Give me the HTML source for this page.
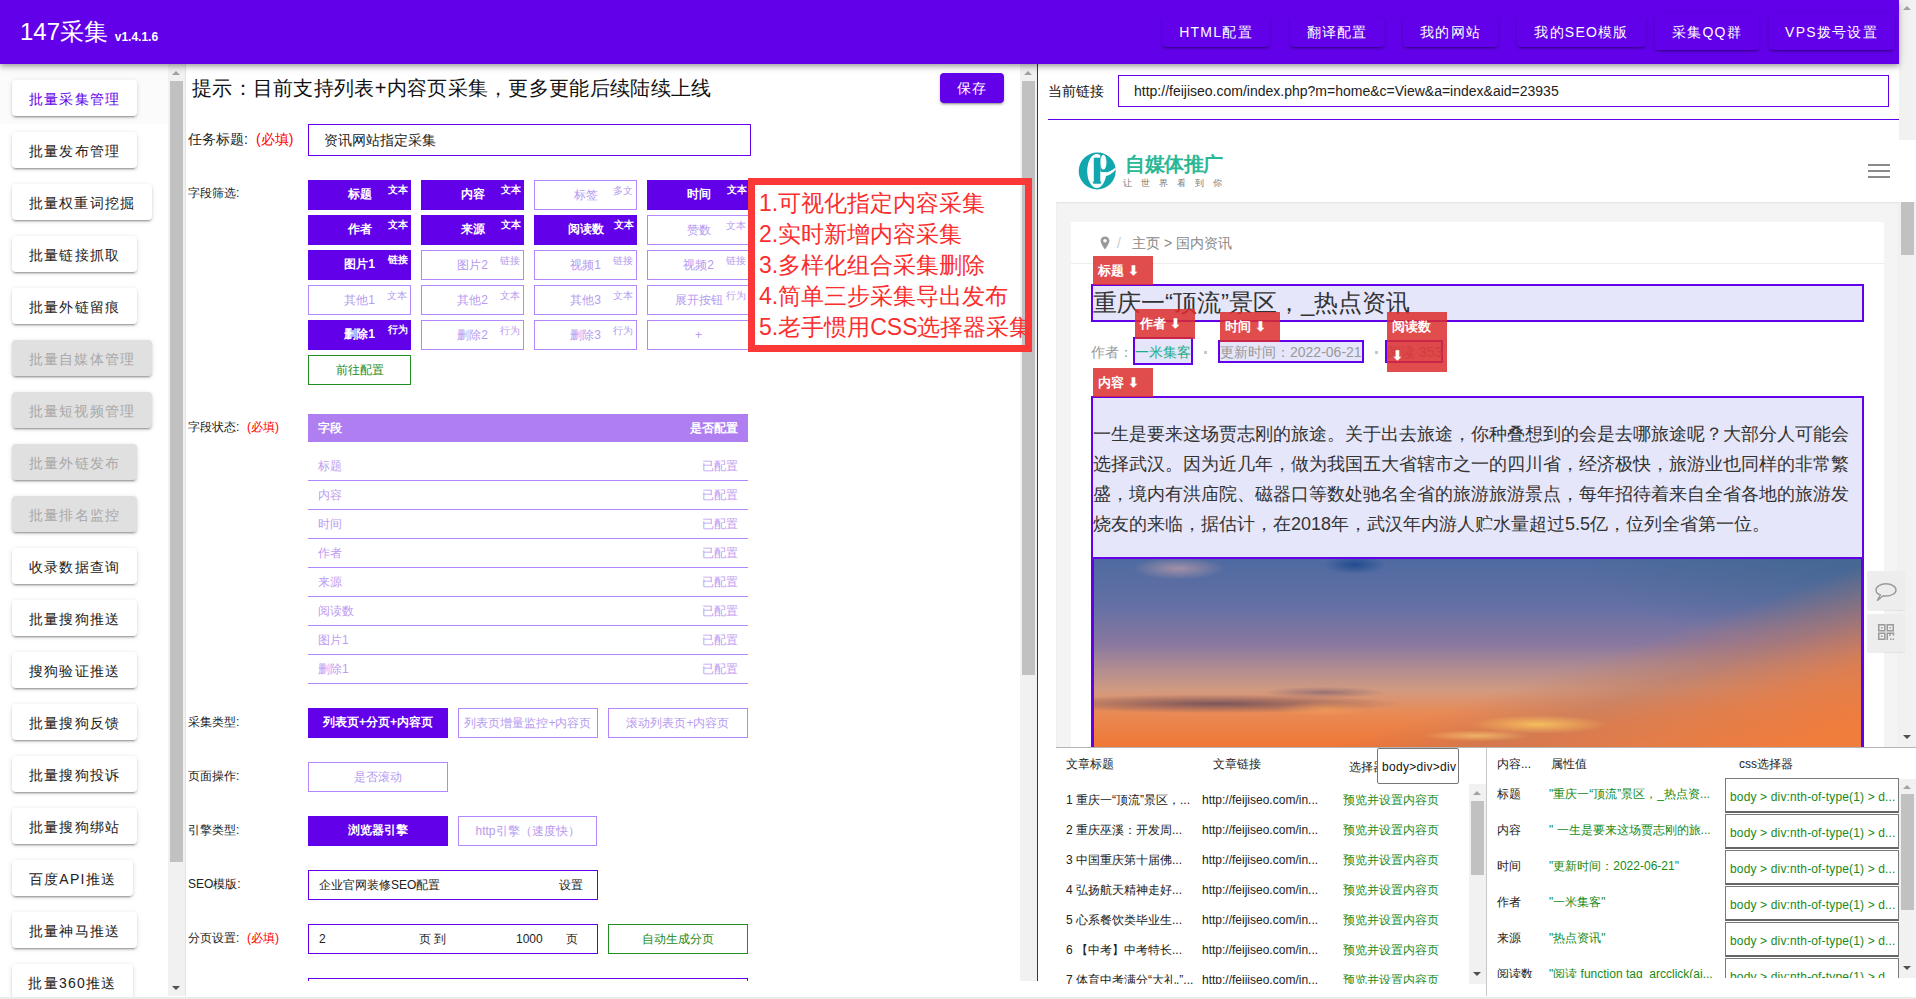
<!DOCTYPE html>
<html><head><meta charset="utf-8">
<style>
*{box-sizing:border-box;margin:0;padding:0}
html,body{width:1916px;height:999px;overflow:hidden}
body{position:relative;background:#fff;font-family:"Liberation Sans",sans-serif;color:#000}
.a{position:absolute}
.hdr{left:0;top:0;width:1899px;height:64px;background:#6200ea;z-index:10;box-shadow:0 2px 4px -1px rgba(0,0,0,.2),0 4px 5px 0 rgba(0,0,0,.14),0 1px 10px 0 rgba(0,0,0,.12)}
.nb{top:17px;height:30px;background:#6200ea;border-radius:4px;color:#fff;font-size:14px;letter-spacing:1.25px;text-align:center;line-height:30px;box-shadow:0 3px 1px -2px rgba(0,0,0,.2),0 2px 2px 0 rgba(0,0,0,.14),0 1px 5px 0 rgba(0,0,0,.12);white-space:nowrap}
.sb{left:12px;height:36px;width:125px;background:#fff;border-radius:4px;color:#222;font-size:14px;letter-spacing:1.25px;text-align:center;line-height:36px;padding-top:1px;box-shadow:0 3px 1px -2px rgba(0,0,0,.2),0 2px 2px 0 rgba(0,0,0,.14),0 1px 5px 0 rgba(0,0,0,.12);white-space:nowrap}
.sb.w{width:140px}.sb.n{width:121px}
.sb.d{background:#e0e0e0;color:#a8a8a8}
.sb.act{color:#6200ea}
.trk{background:#f1f1f1}
.thm{background:#c1c1c1}
.up{width:0;height:0;border-left:4px solid transparent;border-right:4px solid transparent;border-bottom:4px solid #a3a3a3}
.dn{width:0;height:0;border-left:4px solid transparent;border-right:4px solid transparent;border-top:4px solid #505050}
.lbl{font-size:12px;color:#222;white-space:nowrap}
.req{color:#f00}
.fb{width:103px;height:30px;font-size:12px;text-align:center;line-height:28px;white-space:nowrap}
.fb.on{background:#6200ea;color:#fff;font-weight:bold}
.fb.off{border:1px solid #b388ff;color:#b69af0;background:#fff}
.fb sup{position:absolute;right:3px;top:5px;font-size:10px;line-height:10px}
.tr{left:308px;width:440px;height:29px;border-bottom:1px solid #b388ff;color:#c09cf2;font-size:12px;line-height:28px}
.inp{height:30px;border:1px solid #6200ea;font-size:12px;line-height:28px;color:#222}
.tag{background:rgba(220,45,45,.85);color:#fff;font-weight:bold;font-size:13px;line-height:29px;padding-left:5px;white-space:nowrap}
.sunset{background:
radial-gradient(ellipse 4% 5% at 34% 3%,rgba(25,70,140,.85),rgba(25,70,140,0)),
radial-gradient(ellipse 6% 6% at 11% 5%,rgba(230,175,170,.55),rgba(230,175,170,0)),
radial-gradient(ellipse 9% 5% at 58% 88%,rgba(255,205,95,.8),rgba(255,205,95,0)),
radial-gradient(ellipse 7% 3% at 50% 94%,rgba(255,215,120,.6),rgba(255,215,120,0)),
radial-gradient(ellipse 6% 4% at 30% 80%,rgba(245,160,90,.6),rgba(245,160,90,0)),
radial-gradient(ellipse 24% 5% at 16% 77%,rgba(90,65,85,.75),rgba(90,65,85,0)),
radial-gradient(ellipse 8% 3% at 30% 71%,rgba(95,75,105,.5),rgba(95,75,105,0)),
linear-gradient(161deg,rgba(200,120,90,0) 60%,rgba(190,120,95,.55) 71%,rgba(225,125,75,.9) 82%,rgba(240,125,60,1) 95%),
radial-gradient(ellipse 35% 45% at 98% 0%,rgba(60,100,135,.55),rgba(60,100,135,0)),
linear-gradient(180deg,#4e6aa0 0%,#6470a5 25%,#8878a0 45%,#b08c92 58%,#d29a80 70%,#e98a55 82%,#ef7636 100%)}
.bt{font-size:12px;line-height:16px;color:#222;white-space:nowrap}
.sel{width:174px;height:35px;border:1px solid #7a7a7a;border-bottom:2px solid #666;font-size:12px;line-height:37px;padding-left:4px;letter-spacing:0.15px;overflow:hidden;color:#178a17;white-space:nowrap;background:#fff}
</style></head><body>

<!-- HEADER -->
<div class="a hdr">
  <div class="a" style="left:20px;top:16px;color:#fff;font-size:24px;line-height:32px;white-space:nowrap">147采集 <span style="font-size:12px;font-weight:bold;position:relative;top:1px">v1.4.1.6</span></div>
  <div class="a nb" style="left:1162px;width:108px">HTML配置</div>
  <div class="a nb" style="left:1290px;width:94px">翻译配置</div>
  <div class="a nb" style="left:1403px;width:95px">我的网站</div>
  <div class="a nb" style="left:1517px;width:129px">我的SEO模版</div>
  <div class="a nb" style="left:1655px;width:104px;top:14px;height:36px;line-height:36px">采集QQ群</div>
  <div class="a nb" style="left:1769px;width:125px;top:14px;height:36px;line-height:36px">VPS拨号设置</div>
</div>
<!-- page scrollbar top -->
<div class="a trk" style="left:1899px;top:0;width:17px;height:140px"></div>
<div class="a up" style="left:1903px;top:6px"></div>

<!-- SIDEBAR -->
<div id="sbtint" class="a" style="left:0;top:64px;width:168px;height:60px;background:#fbfbfc"></div>
<div class="a sb act" style="top:80px">批量采集管理</div>
<div class="a sb" style="top:132px">批量发布管理</div>
<div class="a sb w" style="top:184px">批量权重词挖掘</div>
<div class="a sb" style="top:236px">批量链接抓取</div>
<div class="a sb" style="top:288px">批量外链留痕</div>
<div class="a sb w d" style="top:340px">批量自媒体管理</div>
<div class="a sb w d" style="top:392px">批量短视频管理</div>
<div class="a sb d" style="top:444px">批量外链发布</div>
<div class="a sb d" style="top:496px">批量排名监控</div>
<div class="a sb" style="top:548px">收录数据查询</div>
<div class="a sb" style="top:600px">批量搜狗推送</div>
<div class="a sb" style="top:652px">搜狗验证推送</div>
<div class="a sb" style="top:704px">批量搜狗反馈</div>
<div class="a sb" style="top:756px">批量搜狗投诉</div>
<div class="a sb" style="top:808px">批量搜狗绑站</div>
<div class="a sb n" style="top:860px">百度API推送</div>
<div class="a sb" style="top:912px">批量神马推送</div>
<div class="a sb n" style="top:964px">批量360推送</div>

<!-- sidebar scrollbar -->
<div class="a trk" style="left:168px;top:64px;width:17px;height:932px"></div>
<div class="a thm" style="left:170px;top:81px;width:13px;height:781px"></div>
<div class="a up" style="left:172px;top:71px"></div>
<div class="a dn" style="left:172px;top:986px"></div>
<div class="a" style="left:185px;top:64px;width:1px;height:932px;background:#e4e4e4"></div>

<!-- MAIN -->
<div id="main">
<div class="a" style="left:192px;top:74px;font-size:20px;line-height:28px;color:#111;white-space:nowrap;letter-spacing:0.3px">提示：目前支持列表+内容页采集，更多更能后续陆续上线</div>
<div class="a" style="left:940px;top:73px;width:64px;height:30px;border-radius:4px;background:#6200ea;color:#fff;font-size:14px;letter-spacing:1.25px;text-align:center;line-height:30px;box-shadow:0 3px 1px -2px rgba(0,0,0,.2),0 2px 2px 0 rgba(0,0,0,.14),0 1px 5px 0 rgba(0,0,0,.12)">保存</div>
<div class="a lbl" style="left:188px;top:131px;font-size:14px">任务标题<span style="display:inline-block;width:12px">:</span><span class="req">(必填)</span></div>
<div class="a" style="left:308px;top:124px;width:443px;height:32px;border:1px solid #6200ea;font-size:14px;line-height:30px;padding-left:15px;color:#222">资讯网站指定采集</div>
<div class="a lbl" style="left:188px;top:185px">字段筛选:</div>
<div class="a fb on" style="left:308px;top:180px">标题<sup>文本</sup></div>
<div class="a fb on" style="left:421px;top:180px">内容<sup>文本</sup></div>
<div class="a fb off" style="left:534px;top:180px">标签<sup>多文</sup></div>
<div class="a fb on" style="left:647px;top:180px">时间<sup>文本</sup></div>
<div class="a fb on" style="left:308px;top:215px">作者<sup>文本</sup></div>
<div class="a fb on" style="left:421px;top:215px">来源<sup>文本</sup></div>
<div class="a fb on" style="left:534px;top:215px">阅读数<sup>文本</sup></div>
<div class="a fb off" style="left:647px;top:215px">赞数<sup>文本</sup></div>
<div class="a fb on" style="left:308px;top:250px">图片1<sup>链接</sup></div>
<div class="a fb off" style="left:421px;top:250px">图片2<sup>链接</sup></div>
<div class="a fb off" style="left:534px;top:250px">视频1<sup>链接</sup></div>
<div class="a fb off" style="left:647px;top:250px">视频2<sup>链接</sup></div>
<div class="a fb off" style="left:308px;top:285px">其他1<sup>文本</sup></div>
<div class="a fb off" style="left:421px;top:285px">其他2<sup>文本</sup></div>
<div class="a fb off" style="left:534px;top:285px">其他3<sup>文本</sup></div>
<div class="a fb off" style="left:647px;top:285px">展开按钮<sup>行为</sup></div>
<div class="a fb on" style="left:308px;top:320px">删除1<sup>行为</sup></div>
<div class="a fb off" style="left:421px;top:320px">删除2<sup>行为</sup></div>
<div class="a fb off" style="left:534px;top:320px">删除3<sup>行为</sup></div>
<div class="a fb off" style="left:647px;top:320px">+</div>
<div class="a fb" style="left:308px;top:355px;border:1px solid #228b22;color:#228b22">前往配置</div>
<div class="a lbl" style="left:188px;top:419px">字段状态<span style="display:inline-block;width:11px">:</span><span class="req">(必填)</span></div>
<div class="a" style="left:308px;top:414px;width:440px;height:28px;background:#af7ff2;color:#fff;font-size:12px;line-height:28px;font-weight:bold"><span class="a" style="left:10px">字段</span><span class="a" style="right:10px">是否配置</span></div>
<div class="a tr" style="top:452px"><span class="a" style="left:10px">标题</span><span class="a" style="right:10px">已配置</span></div>
<div class="a tr" style="top:481px"><span class="a" style="left:10px">内容</span><span class="a" style="right:10px">已配置</span></div>
<div class="a tr" style="top:510px"><span class="a" style="left:10px">时间</span><span class="a" style="right:10px">已配置</span></div>
<div class="a tr" style="top:539px"><span class="a" style="left:10px">作者</span><span class="a" style="right:10px">已配置</span></div>
<div class="a tr" style="top:568px"><span class="a" style="left:10px">来源</span><span class="a" style="right:10px">已配置</span></div>
<div class="a tr" style="top:597px"><span class="a" style="left:10px">阅读数</span><span class="a" style="right:10px">已配置</span></div>
<div class="a tr" style="top:626px"><span class="a" style="left:10px">图片1</span><span class="a" style="right:10px">已配置</span></div>
<div class="a tr" style="top:655px"><span class="a" style="left:10px">删除1</span><span class="a" style="right:10px">已配置</span></div>
<div class="a lbl" style="left:188px;top:714px">采集类型:</div>
<div class="a fb on" style="left:308px;top:708px;width:140px;">列表页+分页+内容页</div>
<div class="a fb off" style="left:458px;top:708px;width:140px;">列表页增量监控+内容页</div>
<div class="a fb off" style="left:608px;top:708px;width:140px;">滚动列表页+内容页</div>
<div class="a lbl" style="left:188px;top:768px">页面操作:</div>
<div class="a fb off" style="left:308px;top:762px;width:140px;">是否滚动</div>
<div class="a lbl" style="left:188px;top:822px">引擎类型:</div>
<div class="a fb on" style="left:308px;top:816px;width:140px;">浏览器引擎</div>
<div class="a fb off" style="left:458px;top:816px;width:139px;">http引擎（速度快）</div>
<div class="a lbl" style="left:188px;top:876px">SEO模版:</div>
<div class="a inp" style="left:308px;top:870px;width:290px"><span class="a" style="left:10px">企业官网装修SEO配置</span><span class="a" style="left:250px">设置</span></div>
<div class="a lbl" style="left:188px;top:930px">分页设置<span style="display:inline-block;width:11px">:</span><span class="req">(必填)</span></div>
<div class="a inp" style="left:308px;top:924px;width:290px"><span class="a" style="left:10px">2</span><span class="a" style="left:110px">页 到</span><span class="a" style="left:207px">1000</span><span class="a" style="left:257px">页</span></div>
<div class="a fb" style="left:608px;top:924px;width:140px;border:1px solid #228b22;color:#228b22">自动生成分页</div>
<div class="a" style="left:308px;top:978px;width:440px;height:3px;border:1px solid #6200ea;border-bottom:0"></div>
<div class="a" style="left:748px;top:178px;width:284px;height:174px;border:7px solid #fb3838;background:#fff;z-index:4"></div>
<div class="a" style="left:759px;top:188px;font-size:23px;line-height:30px;color:#fb2e2e;white-space:nowrap;z-index:7">1.可视化指定内容采集</div>
<div class="a" style="left:759px;top:219px;font-size:23px;line-height:30px;color:#fb2e2e;white-space:nowrap;z-index:7">2.实时新增内容采集</div>
<div class="a" style="left:759px;top:250px;font-size:23px;line-height:30px;color:#fb2e2e;white-space:nowrap;z-index:7">3.多样化组合采集删除</div>
<div class="a" style="left:759px;top:281px;font-size:23px;line-height:30px;color:#fb2e2e;white-space:nowrap;z-index:7">4.简单三步采集导出发布</div>
<div class="a" style="left:759px;top:312px;font-size:23px;line-height:30px;color:#fb2e2e;white-space:nowrap;z-index:7">5.老手惯用CSS选择器采集</div>
<div class="a trk" style="left:1020px;top:64px;width:17px;height:917px;z-index:5"></div>
<div class="a thm" style="left:1022px;top:81px;width:13px;height:594px;z-index:5"></div>
<div class="a up" style="left:1024px;top:71px;z-index:5"></div>
<div class="a dn" style="left:1024px;top:970px"></div>
<div class="a" style="left:1037px;top:64px;width:1px;height:917px;background:#6200ea"></div>
<div class="a" style="left:1025px;top:178px;width:7px;height:174px;background:#fb3838;z-index:8"></div>
<div class="a" style="left:1020px;top:178px;width:12px;height:7px;background:#fb3838;z-index:8"></div>
<div class="a" style="left:1020px;top:345px;width:12px;height:7px;background:#fb3838;z-index:8"></div>
</div><!--/main-->

<!-- RIGHT -->
<div id="right">
<div class="a" style="left:1048px;top:83px;font-size:14px;line-height:16px;color:#111;white-space:nowrap">当前链接</div>
<div class="a" style="left:1118px;top:75px;width:771px;height:32px;border:1px solid #6200ea;font-size:14px;line-height:30px;padding-left:15px;color:#222;white-space:nowrap">http://feijiseo.com/index.php?m=home&amp;c=View&amp;a=index&amp;aid=23935</div>
<div class="a" style="left:1048px;top:119px;width:851px;height:1px;background:#6200ea"></div>
<div class="a" style="left:1056px;top:140px;width:860px;height:62px;background:#fff"></div>
<svg class="a" style="left:1074px;top:148px" width="48" height="46" viewBox="0 0 48 46">
<defs><clipPath id="lc"><circle cx="23.2" cy="23" r="18.5"/></clipPath></defs>
<g clip-path="url(#lc)">
<rect x="0" y="0" width="48" height="46" fill="#12a6ae"/>
<ellipse cx="22.8" cy="23" rx="9.6" ry="17" fill="#fff"/>
<path d="M26.3,4 L44,4 L44,18 C40,21.5 36,24.3 30.5,24.3 C28.5,24.3 27.3,23.8 26.3,23.2 Z" fill="#12a6ae"/>
<ellipse cx="29.4" cy="14.2" rx="3.1" ry="7.4" fill="#fff"/>
<path d="M27,24.2 C33,25.6 38,23 44,17.5 L44,19.5 C39,24.5 35,27.8 31.8,27.9 C30.3,27.9 28.5,26 27,24.2Z" fill="#fff"/>
<rect x="19.8" y="9.7" width="6.5" height="25.8" fill="#12a6ae"/>
<rect x="18.9" y="33.6" width="8.2" height="1.9" fill="#12a6ae"/>
</g></svg>
<div class="a" style="left:1125px;top:151px;font-family:'Liberation Serif',serif;font-weight:bold;font-size:20px;line-height:26px;color:#2ab795;white-space:nowrap;letter-spacing:-0.5px">自媒体推广</div>
<div class="a" style="left:1123px;top:178px;font-size:9px;line-height:11px;color:#777;white-space:nowrap;letter-spacing:9px">让世界看到你</div>
<div class="a" style="left:1868px;top:164px;width:22px;height:2px;background:#8a8a8a"></div>
<div class="a" style="left:1868px;top:170px;width:22px;height:2px;background:#8a8a8a"></div>
<div class="a" style="left:1868px;top:176px;width:22px;height:2px;background:#8a8a8a"></div>
<div class="a" style="left:1056px;top:202px;width:843px;height:545px;background:#f4f4f4;box-shadow:inset 0 1px 2px rgba(0,0,0,.08)"></div>
<div class="a trk" style="left:1899px;top:202px;width:17px;height:545px"></div>
<div class="a thm" style="left:1901px;top:202px;width:13px;height:53px"></div>
<div class="a dn" style="left:1903px;top:735px"></div>
<div class="a" style="left:1071px;top:222px;width:813px;height:525px;background:#fff"></div>
<div class="a" style="left:1071px;top:263px;width:813px;height:1px;background:#eee"></div>
<svg class="a" style="left:1100px;top:236px" width="10" height="14" viewBox="0 0 10 14"><path d="M5 0.5 C2.3 0.5 0.6 2.5 0.6 4.8 C0.6 7.6 5 13.5 5 13.5 C5 13.5 9.4 7.6 9.4 4.8 C9.4 2.5 7.7 0.5 5 0.5Z M5 3 a1.8 1.8 0 1 1 0 3.6 a1.8 1.8 0 1 1 0 -3.6Z" fill="#999" fill-rule="evenodd"/></svg>
<div class="a" style="left:1117px;top:235px;font-size:14px;line-height:16px;color:#ccc">/</div>
<div class="a" style="left:1132px;top:235px;font-size:14px;line-height:16px;color:#888;white-space:nowrap">主页 &gt; 国内资讯</div>
<div class="a" style="left:1091px;top:284px;width:773px;height:38px;border:2px solid #6200ea;background:#e6e6fa"></div>
<div class="a" style="left:1093px;top:288px;font-size:24px;line-height:30px;color:#333;white-space:nowrap">重庆一“顶流”景区，_热点资讯</div>
<div class="a" style="left:1091px;top:344px;font-size:14px;line-height:16px;color:#999;white-space:nowrap">作者：</div>
<div class="a" style="left:1133px;top:337px;width:60px;height:28px;border:2px solid #6200ea;background:#e6e6fa"></div>
<div class="a" style="left:1135px;top:344px;font-size:14px;line-height:16px;color:#1fae8a;white-space:nowrap">一米集客</div>
<div class="a" style="left:1204px;top:351px;width:3px;height:3px;background:#c8c8c8"></div>
<div class="a" style="left:1218px;top:340px;width:146px;height:23px;border:2px solid #6200ea;background:#e6e6fa"></div>
<div class="a" style="left:1220px;top:344px;font-size:14px;line-height:16px;color:#999;white-space:nowrap">更新时间：2022-06-21</div>
<div class="a" style="left:1375px;top:351px;width:3px;height:3px;background:#c8c8c8"></div>
<div class="a" style="left:1385px;top:340px;width:58px;height:23px;border:2px solid #6200ea;background:#e6e6fa"></div>
<div class="a" style="left:1387px;top:344px;font-size:14px;line-height:16px;color:#999;white-space:nowrap">阅读 353</div>
<div class="a" style="left:1091px;top:396px;width:773px;height:163px;border:2px solid #6200ea;background:#e6e6fa"></div>
<div class="a" style="left:1093px;top:419px;font-size:18px;line-height:30px;color:#333;white-space:nowrap">一生是要来这场贾志刚的旅途。关于出去旅途，你种叠想到的会是去哪旅途呢？大部分人可能会</div>
<div class="a" style="left:1093px;top:449px;font-size:18px;line-height:30px;color:#333;white-space:nowrap">选择武汉。因为近几年，做为我国五大省辖市之一的四川省，经济极快，旅游业也同样的非常繁</div>
<div class="a" style="left:1093px;top:479px;font-size:18px;line-height:30px;color:#333;white-space:nowrap">盛，境内有洪庙院、磁器口等数处驰名全省的旅游旅游景点，每年招待着来自全省各地的旅游发</div>
<div class="a" style="left:1093px;top:509px;font-size:18px;line-height:30px;color:#333;white-space:nowrap">烧友的来临，据估计，在2018年，武汉年内游人贮水量超过5.5亿，位列全省第一位。</div>
<div class="a" style="left:1091px;top:557px;width:773px;height:190px;border:2px solid #6200ea;border-bottom:0;background:#6200ea"></div>
<div class="a sunset" style="left:1094px;top:559px;width:767px;height:188px"></div>
<div class="a tag" style="left:1093px;top:256px;width:60px;height:29px">标题 ⬇</div>
<div class="a tag" style="left:1135px;top:309px;width:60px;height:30px">作者 ⬇</div>
<div class="a tag" style="left:1220px;top:312px;width:60px;height:30px">时间 ⬇</div>
<div class="a tag" style="left:1387px;top:312px;width:60px;height:60px">阅读数<br>⬇</div>
<div class="a tag" style="left:1093px;top:368px;width:60px;height:29px">内容 ⬇</div>
<div class="a" style="left:1867px;top:571px;width:38px;height:39px;background:#ededed;border-radius:2px;box-shadow:0 1px 1px rgba(0,0,0,.07)"></div>
<svg class="a" style="left:1874px;top:582px" width="24" height="20" viewBox="0 0 24 20"><path d="M12 1.8 C6.6 1.8 2 4.4 2 7.9 C2 10.1 3.8 12 6.4 13 L3.4 18.4 L9.2 13.8 C10.1 13.95 11 14 12 14 C17.4 14 22 11.4 22 7.9 C22 4.4 17.4 1.8 12 1.8Z" fill="none" stroke="#9a9a9a" stroke-width="1.4" stroke-linejoin="round"/></svg>
<div class="a" style="left:1867px;top:614px;width:38px;height:38px;background:#ededed;border-radius:2px;box-shadow:0 1px 1px rgba(0,0,0,.07)"></div>
<svg class="a" style="left:1877px;top:623px" width="18" height="18" viewBox="0 0 18 18" fill="none" stroke="#9a9a9a" stroke-width="1.5"><rect x="1.75" y="1.75" width="6" height="6"/><rect x="10.25" y="1.75" width="6" height="6"/><rect x="1.75" y="10.25" width="6" height="6"/><rect x="4" y="4" width="1.5" height="1.5" fill="#9a9a9a" stroke="none"/><rect x="12.5" y="4" width="1.5" height="1.5" fill="#9a9a9a" stroke="none"/><rect x="4" y="12.5" width="1.5" height="1.5" fill="#9a9a9a" stroke="none"/><path d="M10.25 17 V10.25 H13 V13 M13 10.25 H16.5 V12.5" /><rect x="13" y="15.5" width="1.5" height="1.5" fill="#9a9a9a" stroke="none"/><rect x="15.5" y="15.5" width="1.5" height="1.5" fill="#9a9a9a" stroke="none"/></svg>
<div class="a" style="left:1056px;top:747px;width:860px;height:249px;background:#fff;border-top:1px solid #b5b5b5"></div>
<div class="a bt" style="left:1066px;top:756px">文章标题</div>
<div class="a bt" style="left:1213px;top:756px">文章链接</div>
<div class="a bt" style="left:1349px;top:759px">选择器</div>
<div class="a" style="left:1377px;top:748px;width:82px;height:36px;background:#fff;border:1px solid #767676;border-radius:2px;font-size:12px;line-height:36px;padding-left:4px;color:#111;letter-spacing:0.3px;white-space:nowrap;overflow:hidden">body&gt;div&gt;div</div>
<div class="a" style="left:1056px;top:785px;width:413px;height:199px;overflow:hidden">
<div class="a bt" style="left:10px;top:7px">1 重庆一“顶流”景区，...</div>
<div class="a bt" style="left:146px;top:7px">http://feijiseo.com/in...</div>
<div class="a bt" style="left:287px;top:7px;color:#178a17">预览并设置内容页</div>
<div class="a bt" style="left:10px;top:37px">2 重庆巫溪：开发周...</div>
<div class="a bt" style="left:146px;top:37px">http://feijiseo.com/in...</div>
<div class="a bt" style="left:287px;top:37px;color:#178a17">预览并设置内容页</div>
<div class="a bt" style="left:10px;top:67px">3 中国重庆第十届佛...</div>
<div class="a bt" style="left:146px;top:67px">http://feijiseo.com/in...</div>
<div class="a bt" style="left:287px;top:67px;color:#178a17">预览并设置内容页</div>
<div class="a bt" style="left:10px;top:97px">4 弘扬航天精神走好...</div>
<div class="a bt" style="left:146px;top:97px">http://feijiseo.com/in...</div>
<div class="a bt" style="left:287px;top:97px;color:#178a17">预览并设置内容页</div>
<div class="a bt" style="left:10px;top:127px">5 心系餐饮类毕业生...</div>
<div class="a bt" style="left:146px;top:127px">http://feijiseo.com/in...</div>
<div class="a bt" style="left:287px;top:127px;color:#178a17">预览并设置内容页</div>
<div class="a bt" style="left:10px;top:157px">6 【中考】中考特长...</div>
<div class="a bt" style="left:146px;top:157px">http://feijiseo.com/in...</div>
<div class="a bt" style="left:287px;top:157px;color:#178a17">预览并设置内容页</div>
<div class="a bt" style="left:10px;top:187px">7 体育中考满分“大礼.”...</div>
<div class="a bt" style="left:146px;top:187px">http://feijiseo.com/in...</div>
<div class="a bt" style="left:287px;top:187px;color:#178a17">预览并设置内容页</div>
</div>
<div class="a trk" style="left:1469px;top:784px;width:17px;height:200px"></div>
<div class="a thm" style="left:1471px;top:801px;width:13px;height:74px"></div>
<div class="a up" style="left:1473px;top:791px"></div>
<div class="a dn" style="left:1473px;top:972px"></div>
<div class="a" style="left:1486px;top:748px;width:1px;height:248px;background:#c8c8c8"></div>
<div class="a bt" style="left:1497px;top:756px">内容...</div>
<div class="a bt" style="left:1551px;top:756px">属性值</div>
<div class="a bt" style="left:1739px;top:756px">css选择器</div>
<div class="a" style="left:1487px;top:770px;width:412px;height:208px;overflow:hidden">
<div class="a bt" style="left:10px;top:16px">标题</div>
<div class="a bt" style="left:62px;top:16px;color:#178a17">&quot;重庆一“顶流”景区，_热点资...</div>
<div class="a sel" style="left:238px;top:8px">body &gt; div:nth-of-type(1) &gt; d...</div>
<div class="a bt" style="left:10px;top:52px">内容</div>
<div class="a bt" style="left:62px;top:52px;color:#178a17">&quot; 一生是要来这场贾志刚的旅...</div>
<div class="a sel" style="left:238px;top:44px">body &gt; div:nth-of-type(1) &gt; d...</div>
<div class="a bt" style="left:10px;top:88px">时间</div>
<div class="a bt" style="left:62px;top:88px;color:#178a17">&quot;更新时间：2022-06-21&quot;</div>
<div class="a sel" style="left:238px;top:80px">body &gt; div:nth-of-type(1) &gt; d...</div>
<div class="a bt" style="left:10px;top:124px">作者</div>
<div class="a bt" style="left:62px;top:124px;color:#178a17">&quot;一米集客&quot;</div>
<div class="a sel" style="left:238px;top:116px">body &gt; div:nth-of-type(1) &gt; d...</div>
<div class="a bt" style="left:10px;top:160px">来源</div>
<div class="a bt" style="left:62px;top:160px;color:#178a17">&quot;热点资讯&quot;</div>
<div class="a sel" style="left:238px;top:152px">body &gt; div:nth-of-type(1) &gt; d...</div>
<div class="a bt" style="left:10px;top:196px">阅读数</div>
<div class="a bt" style="left:62px;top:196px;color:#178a17">&quot;阅读 function tag_arcclick(ai...</div>
<div class="a sel" style="left:238px;top:188px">body &gt; div:nth-of-type(1) &gt; d...</div>
</div>
<div class="a trk" style="left:1899px;top:779px;width:17px;height:199px"></div>
<div class="a thm" style="left:1901px;top:794px;width:13px;height:116px"></div>
<div class="a up" style="left:1903px;top:785px"></div>
<div class="a dn" style="left:1903px;top:966px"></div>
</div><!--/right-->

<!-- bottom bar -->
<div class="a" style="left:0;top:997px;width:1916px;height:2px;background:#ebebeb"></div>
</body></html>
